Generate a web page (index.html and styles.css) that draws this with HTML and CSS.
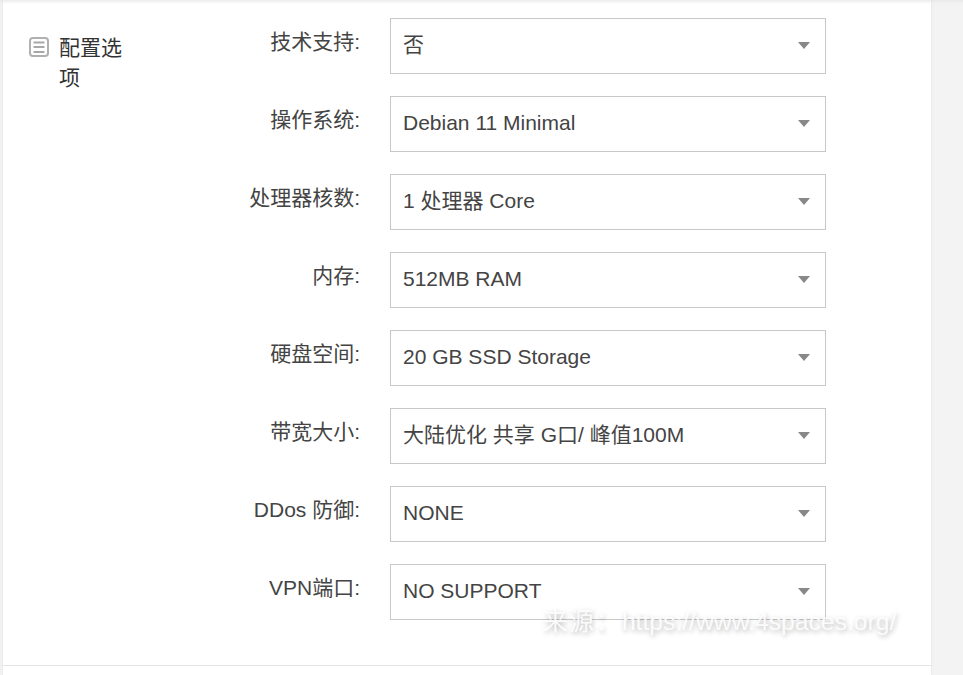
FILE: index.html
```html
<!DOCTYPE html>
<html lang="zh-CN">

<head>
    <meta charset="UTF-8">
    <meta name="viewport" content="width=device-width, initial-scale=1.0">
    <title>配置选项</title>
    <link rel="stylesheet" href="styles.css">
</head>

<body>
    <div class="panel">
        <div class="section">
            <div class="section-title">
                <svg class="section-icon" width="20" height="20" viewBox="0 0 20 20" fill="none">
                    <rect x="1" y="1" width="18" height="18" rx="3" stroke="#b0b0b0" stroke-width="2" />
                    <path d="M4.5 5.5h11M4.5 10h11M4.5 15h11" stroke="#a8a8a8" stroke-width="2" />
                </svg>
                <span class="section-name">配置选项</span>
            </div>
            <div class="options">
                <div class="option">
                    <label class="option-label">技术支持:</label>
                    <div class="select">否<span class="arrow"></span></div>
                </div>
                <div class="option">
                    <label class="option-label">操作系统:</label>
                    <div class="select">Debian 11 Minimal<span class="arrow"></span></div>
                </div>
                <div class="option">
                    <label class="option-label">处理器核数:</label>
                    <div class="select">1 处理器 Core<span class="arrow"></span></div>
                </div>
                <div class="option">
                    <label class="option-label">内存:</label>
                    <div class="select">512MB RAM<span class="arrow"></span></div>
                </div>
                <div class="option">
                    <label class="option-label">硬盘空间:</label>
                    <div class="select">20 GB SSD Storage<span class="arrow"></span></div>
                </div>
                <div class="option">
                    <label class="option-label">带宽大小:</label>
                    <div class="select">大陆优化 共享 G口/ 峰值100M<span class="arrow"></span></div>
                </div>
                <div class="option">
                    <label class="option-label">DDos 防御:</label>
                    <div class="select">NONE<span class="arrow"></span></div>
                </div>
                <div class="option">
                    <label class="option-label">VPN端口:</label>
                    <div class="select">NO SUPPORT<span class="arrow"></span></div>
                </div>
            </div>
        </div>
    </div>
    <div class="watermark"><span class="watermark-prefix">来源：</span>https://www.4spaces.org/</div>
</body>

</html>
```

FILE: styles.css
```css
* {
    box-sizing: border-box;
    margin: 0;
    padding: 0;
}

html,
body {
    height: 675px;
    overflow: hidden;
}

body {
    position: relative;
    font-family: "Liberation Sans", "Noto Sans CJK SC", sans-serif;
    font-size: 21px;
    color: #444;
    background: linear-gradient(#e9e9e9, #f3f3f3 4px);
    padding-left: 3px;
}

.panel {
    width: 928px;
    height: 675px;
    background: linear-gradient(#ececec, #fff 4px);
    box-shadow: 0 0 3px rgba(0, 0, 0, 0.08);
}

.section {
    display: flex;
    height: 666px;
    padding-top: 18px;
    border-bottom: 1px solid #e4e4e4;
}

.section-title {
    display: flex;
    align-items: flex-start;
    width: 137px;
    padding: 15px 0 0 26px;
    color: #333;
    line-height: 30px;
}

.section-icon {
    flex: none;
    margin: 4px 10px 0 0;
    filter: blur(0.4px);
}

.section-name {
    width: 64px;
}

.options {
    display: flex;
    flex-direction: column;
    gap: 22px;
}

.option {
    display: flex;
    height: 56px;
}

.option-label {
    width: 220px;
    padding-top: 9px;
    text-align: right;
    line-height: 30px;
}

.select {
    position: relative;
    width: 436px;
    height: 56px;
    margin-left: 30px;
    padding-left: 12px;
    line-height: 52px;
    background: #fff;
    border: 1px solid #c8c8c8;
}

.arrow {
    position: absolute;
    top: 23px;
    right: 15px;
    border-left: 6px solid transparent;
    border-right: 6px solid transparent;
    border-top: 7px solid #888;
}

.watermark {
    position: absolute;
    top: 607px;
    left: 543px;
    font-size: 24.7px;
    line-height: 30px;
    white-space: nowrap;
    color: rgba(255, 255, 255, 0.9);
    text-shadow: 1px 2px 5px rgba(0, 0, 0, 0.28);
}

.watermark-prefix {
    letter-spacing: 1.6px;
}
```
